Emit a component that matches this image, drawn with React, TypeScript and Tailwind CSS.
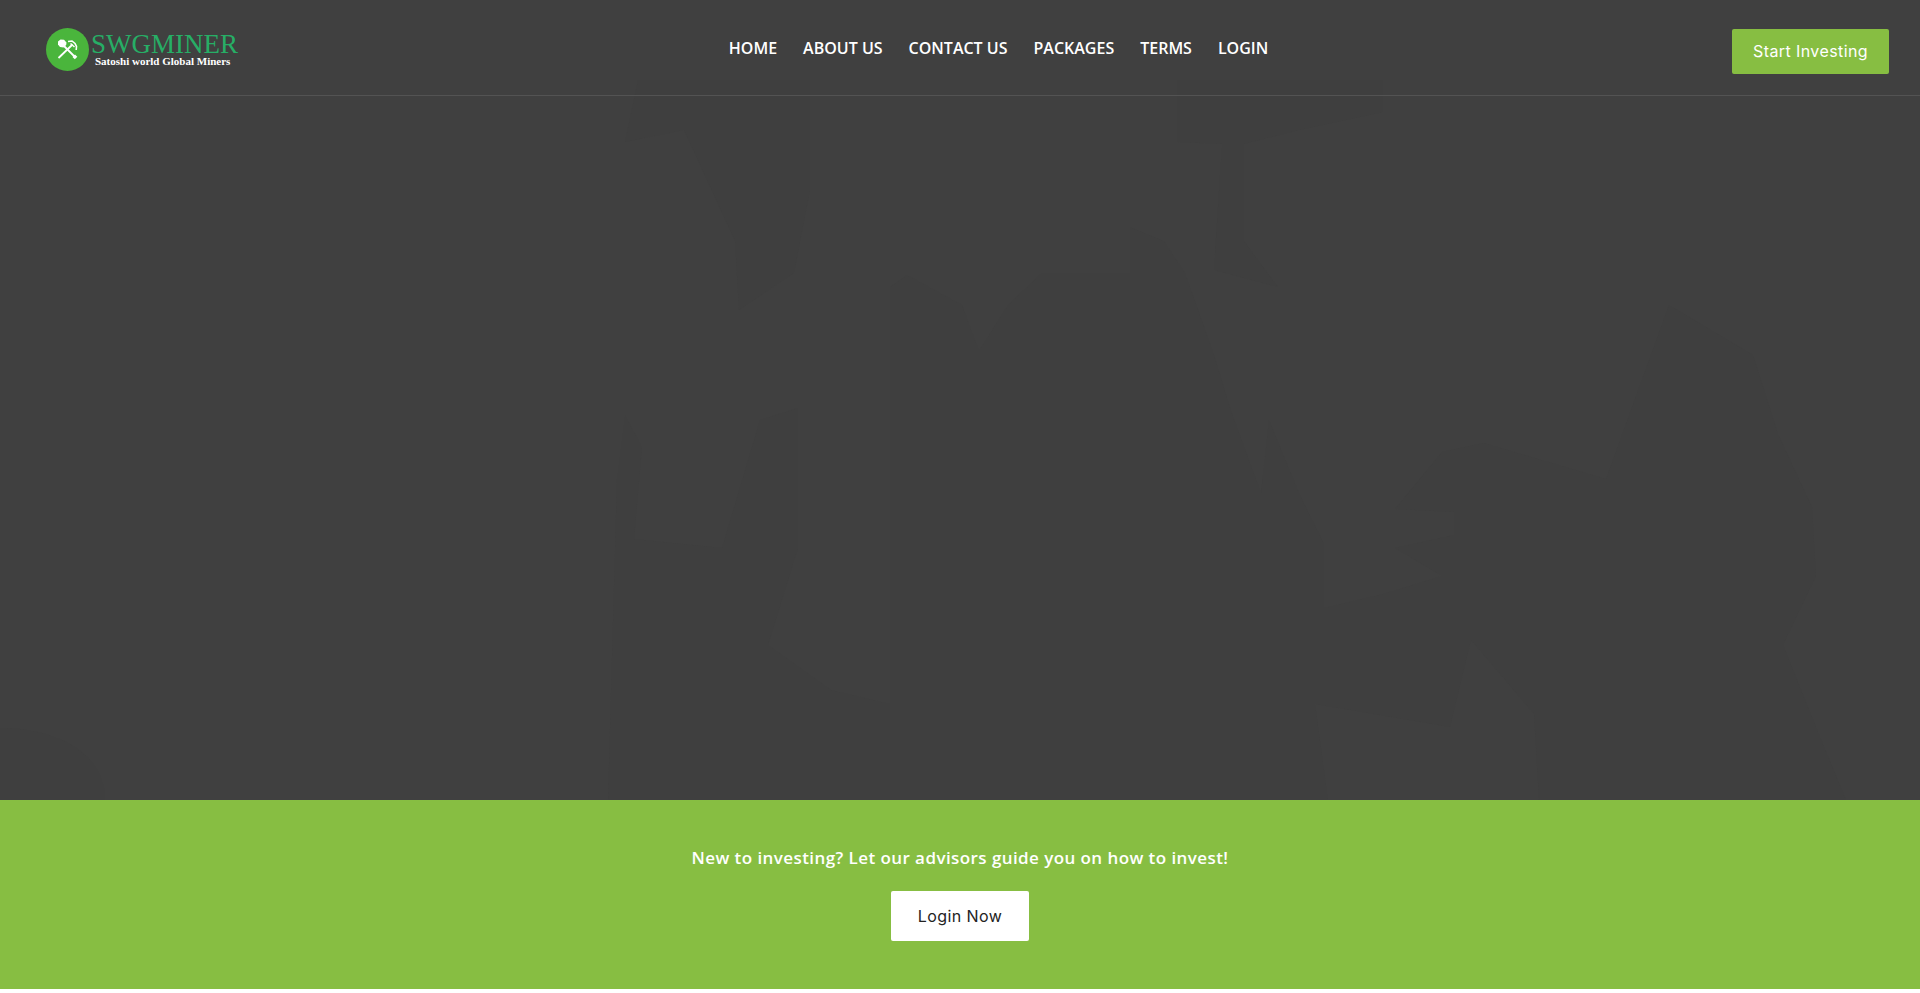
import React from 'react';

const navLinks = [
    { label: 'HOME', href: '#home' },
    { label: 'ABOUT US', href: '#about' },
    { label: 'CONTACT US', href: '#contact' },
    { label: 'PACKAGES', href: '#packages' },
    { label: 'TERMS', href: '#terms' },
    { label: 'LOGIN', href: '#login' },
];

function LogoMark() {
    return (
        <svg className="h-[43px] w-[43px] shrink-0" viewBox="0 0 43 43" fill="none" aria-hidden="true">
            <circle cx="21.5" cy="21.5" r="21.5" fill="#4ab53c" />
            {/* Shovel */}
            <path d="M12 13.500l2.500-2 3.500.3 2.500 2.700-.3 2.500-2.700 2.500-3.500-.5-2-2.500z" fill="#fff" />
            <path d="M17 17L28.500 28.500" stroke="#fff" strokeWidth="1.800" />
            <path d="M26.500 29l2.500-2.500 2.300 2.300-2.500 2.500z" fill="#fff" />
            {/* Pickaxe */}
            <path d="M12.500 30L26.500 16.500" stroke="#fff" strokeWidth="1.800" />
            <path d="M22 13.500l4-.5 3 2.500 1.500 3-.3 3.500" stroke="#fff" strokeWidth="1.600" />
            <path d="M24.500 15.500l4 3.500" stroke="#fff" strokeWidth="1.500" />
        </svg>
    );
}

function Logo() {
    return (
        <a href="#home" className="flex items-center gap-0.5 pt-1">
            <LogoMark />
            <span className="flex flex-col font-['Liberation_Serif',serif]">
                <span className="text-[27px] leading-[22px] text-[#27ae66]">SWGMINER</span>
                <span className="pl-1 text-[11px] leading-3 font-bold text-white">Satoshi world Global Miners</span>
            </span>
        </a>
    );
}

function Header() {
    return (
        <header className="relative grid h-24 grid-cols-[11fr_auto_10fr] items-center border-b border-[#535353] pr-[31px] pl-[46px]">
            <Logo />
            <nav aria-label="Main">
                <ul className="flex gap-[26px] font-['Open_Sans',sans-serif] text-[16px] font-semibold text-white">
                    {navLinks.map((link) => (
                        <li key={link.label}>
                            <a href={link.href}>{link.label}</a>
                        </li>
                    ))}
                </ul>
            </nav>
            <a
                href="#invest"
                className="mt-2 justify-self-end rounded-xs bg-[#87be42] px-[21px] py-2.5 font-['Inter',sans-serif] text-[16px] leading-[25px] tracking-wide text-white"
            >
                Start Investing
            </a>
        </header>
    );
}

// Faint figures behind the hero overlay
function HeroBackdrop() {
    return (
        <svg
            className="absolute inset-0 h-full w-full"
            viewBox="0 0 1920 800"
            preserveAspectRatio="xMidYMid slice"
            fill="#3f3f3f"
            aria-hidden="true"
        >
            <path d="M638 80H810V190L794 273L739 310L735 241L684 130L625 142Z" />
            <path d="M1177 80H1383V112L1299 130L1244 144V241L1278 287L1214 270L1222 144L1177 142Z" />
            <path d="M625 415L642 447L634 539L722 548L760 420L798 408V548L768 645L831 690L890 704V287L907 275L962 305L979 351L1008 305L1042 273H1130V227L1164 241L1185 273L1214 355L1231 411L1261 493L1269 420L1299 493L1324 544V608L1383 594L1442 576L1395 548L1454 535V512L1395 509L1442 452L1484 443L1606 479L1644 374L1669 305L1711 330L1753 355L1778 434L1812 507L1816 576L1783 645L1820 737L1846 800H1539L1534 714L1471 640L1450 727L1315 704L1328 800H608L617 479Z" />
            <path d="M0 728C60 728 105 755 105 800H0Z" />
        </svg>
    );
}

export default function App() {
    return (
        <div className="min-h-screen bg-white">
            <section className="relative min-h-[800px] bg-[#404040]">
                <HeroBackdrop />
                <Header />
            </section>

            <section className="flex flex-col items-center bg-[#87be42] px-4 pt-11 pb-12">
                <h2 className="font-['Open_Sans',sans-serif] text-[17px] leading-7 font-semibold tracking-wide text-white">
                    New to investing? Let our advisors guide you on how to invest!
                </h2>
                <a
                    href="#login"
                    className="mt-[19px] rounded-xs bg-white px-[27px] py-3 font-['Inter',sans-serif] text-[16px] leading-[26px] tracking-wide text-[#232323]"
                >
                    Login Now
                </a>
            </section>
        </div>
    );
}
